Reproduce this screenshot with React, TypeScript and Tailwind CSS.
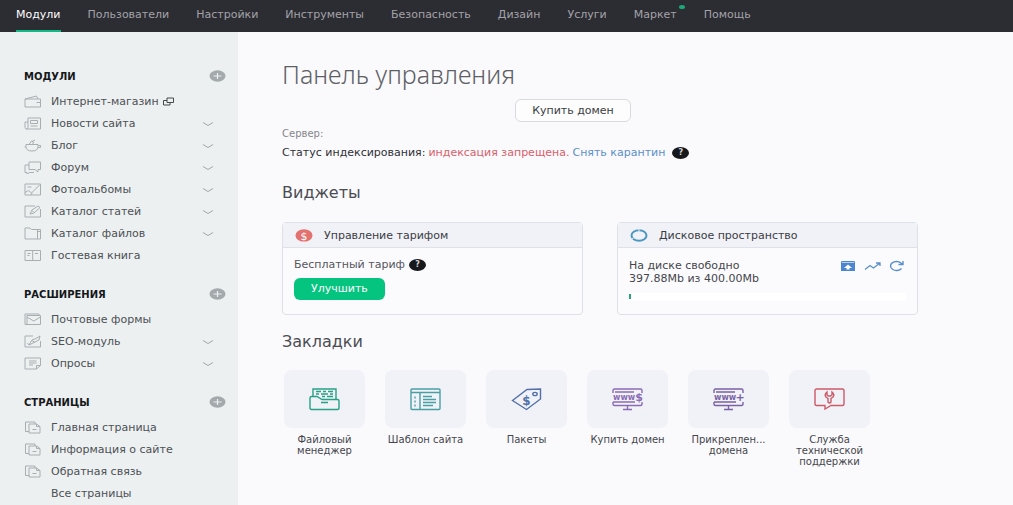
import type { ReactNode } from 'react';

type NavItem = { label: string; active?: boolean; dot?: boolean };

const NAV: NavItem[] = [
  { label: 'Модули', active: true },
  { label: 'Пользователи' },
  { label: 'Настройки' },
  { label: 'Инструменты' },
  { label: 'Безопасность' },
  { label: 'Дизайн' },
  { label: 'Услуги' },
  { label: 'Маркет', dot: true },
  { label: 'Помощь' },
];

// Sidebar glyphs, all drawn in a 17x13 box
const GLYPHS: Record<string, ReactNode> = {
  wallet: <path d="M1 4h15.500v8H1zM1 4 12.500 1l1.500 3M12.500 7.500H16" />,
  news: <path d="M4 1h12.500v11H2.500Q1 12 1 10.500V5h3M4 1v9.500Q4 12 2.500 12M6.500 3.500h7v3h-7zM6.500 9h7" />,
  cup: <path d="M2 5.500h12v2Q14 12 8 12T2 7.500zM14 6.500h2.500v2H14M2 8H.5M5 5.500 7.500 2l2 1-1 2.500M8 2.500 11 1" />,
  forum: <path d="M5 1h11.500v7.500H14V11l-3-2.500H5zM5 4H1v7.500h2V13l2.500-1.500H10" />,
  photo: <path d="M1 1h15.500v11H1zM3.500 4h4M1 9.500l3.500-2 3 2.500 8-8M7 12l1-2" />,
  article: <path d="M11 1H1v11h15.500V4M6 9l2-4 6-4 2 1.500L10 8zM8 5.500 10 7.500" />,
  folder: <path d="M1 12V1h5l1.500 1.500h9V12zM13.500 2.500V12M13.500 4.500h3" />,
  book: <path d="M1 1.500h15.500v10H1zM8.700 1.500v10M3.500 4.500h3M11 4.500h3M3.500 6.500h2" />,
  mail: <path d="M3 2.500h13.500v9H3zM3 4l6.700 4 6.800-4M3 11.500H1V1h14v1.500" />,
  seo: <path d="M9 1H1v11h15.500V6M5 10l3-5 4-1.500 4-2.500-1 4-4 2zM5 10 3.500 8M8 5.500 11 7.500" />,
  poll: <path d="M1 1h15.500v7.500L12.500 12H1zM12.500 12V8.500h4M5 4h7.500M5 6h7.500M5 8h4" />,
  page: <path d="M5 3h7.500L16 5.500V12H5zM12.500 3v2.500H16M5 10.500H1.500V1H11v2M8.500 8.500h4" />,
};

type Entry = { label: string; icon?: string; expandable?: boolean; external?: boolean };

const SECTIONS: { title: string; items: Entry[] }[] = [
  {
    title: 'МОДУЛИ',
    items: [
      { label: 'Интернет-магазин', icon: 'wallet', external: true },
      { label: 'Новости сайта', icon: 'news', expandable: true },
      { label: 'Блог', icon: 'cup', expandable: true },
      { label: 'Форум', icon: 'forum', expandable: true },
      { label: 'Фотоальбомы', icon: 'photo', expandable: true },
      { label: 'Каталог статей', icon: 'article', expandable: true },
      { label: 'Каталог файлов', icon: 'folder', expandable: true },
      { label: 'Гостевая книга', icon: 'book' },
    ],
  },
  {
    title: 'РАСШИРЕНИЯ',
    items: [
      { label: 'Почтовые формы', icon: 'mail' },
      { label: 'SEO-модуль', icon: 'seo', expandable: true },
      { label: 'Опросы', icon: 'poll', expandable: true },
    ],
  },
  {
    title: 'СТРАНИЦЫ',
    items: [
      { label: 'Главная страница', icon: 'page' },
      { label: 'Информация о сайте', icon: 'page' },
      { label: 'Обратная связь', icon: 'page' },
      { label: 'Все страницы' },
    ],
  },
];

function TopNav() {
  return (
    <header className="h-8 bg-[#2c2c33]">
      <nav className="flex h-full gap-[27px] px-4">
        {NAV.map((item) => (
          <a
            key={item.label}
            href="#"
            className={
              item.active
                ? 'relative flex h-8 items-center border-b-2 border-[#12b886] text-white'
                : 'relative flex h-8 items-center pb-[2px] text-[#a3a3a8]'
            }
          >
            {item.label}
            {item.dot && <span className="absolute top-[5px] -right-2 h-1 w-[6px] rounded-[50%] bg-[#19a974]" />}
          </a>
        ))}
      </nav>
    </header>
  );
}

function Sidebar() {
  return (
    <aside className="flex w-[238px] shrink-0 flex-col gap-[14px] bg-[#ecf0f1] pt-[30px] pr-3 pl-6">
      {SECTIONS.map((section) => (
        <section key={section.title}>
          <div className="flex h-7 items-center justify-between">
            <h2 className="text-[10px] font-bold text-[#15171a]">{section.title}</h2>
            <button type="button" aria-label="Добавить">
              <svg width="17" height="12" viewBox="0 0 17 12">
                <ellipse cx="8.500" cy="6" rx="8" ry="5.700" fill="#a4a9ab" />
                <path d="M4.500 6h8M8.500 3v6" stroke="#ecf0f1" strokeWidth="1.200" />
              </svg>
            </button>
          </div>
          <ul>
            {section.items.map((item) => (
              <li key={item.label} className="flex h-[22px] items-center">
                <a href="#" className="flex flex-1 items-center text-[#4d5154]">
                  <span className="w-[27px]">
                    {item.icon && (
                      <svg width="17" height="13" viewBox="0 0 17 13" fill="none" stroke="#a9aeb1">
                        {GLYPHS[item.icon]}
                      </svg>
                    )}
                  </span>
                  <span className="pt-[2px]">{item.label}</span>
                  {item.external && (
                    <svg className="ml-1" width="11" height="9" viewBox="0 0 11 9" fill="none" stroke="#45494c">
                      <path d="M4 1h6.500v4.500H4zM4 3.500H.5v4.500H7V5.500" />
                    </svg>
                  )}
                </a>
                {item.expandable && (
                  <button type="button" aria-label="Развернуть" className="mr-3 pt-[2px]">
                    <svg width="12" height="6" viewBox="0 0 12 6" fill="none" stroke="#a2a7aa">
                      <path d="M1 1.500 6 4.500l5-3" />
                    </svg>
                  </button>
                )}
              </li>
            ))}
          </ul>
        </section>
      ))}
    </aside>
  );
}

function Help() {
  return (
    <button
      type="button"
      className="h-3 w-[17px] rounded-[50%] bg-[#17181b] text-center text-[8px] leading-3 font-bold text-[#d5d5d8]"
    >
      ?
    </button>
  );
}

function Widget({ icon, title, children }: { icon: ReactNode; title: string; children: ReactNode }) {
  return (
    <section className="h-[93px] flex-1 rounded border border-[#dfe1e8] bg-[#fbfbfd]">
      <h3 className="flex h-[25px] items-center gap-[11px] border-b border-[#dfe1e8] bg-[#f1f2f8] pl-3 text-[#3b3c42]">
        {icon}
        <span className="pt-[2px]">{title}</span>
      </h3>
      {children}
    </section>
  );
}

const DollarIcon = (
  <svg width="18" height="13" viewBox="0 0 18 13">
    <ellipse cx="9" cy="6.500" rx="8.500" ry="6.200" fill="#e2716f" />
    <text x="9" y="10.500" fill="#fff" fontSize="11" textAnchor="middle">$</text>
  </svg>
);

const DiskIcon = (
  <svg width="18" height="13" viewBox="0 0 18 13" fill="none" strokeWidth="2">
    <ellipse cx="9" cy="6.500" rx="7.500" ry="5.300" stroke="#4a97c0" />
    <path d="M9 0v2.500M1 10.500 3.500 9" stroke="#f1f2f8" strokeWidth="1" />
  </svg>
);

function Monitor({ sign }: { sign: string }) {
  return (
    <>
      <path d="M1 5V2.500Q1 1 2.500 1h26Q30 1 30 2.500V5M1 14v2q0 1.500 1.500 1.500h26q1.500 0 1.500-1.500v-2M1 14h22M3 4h19M15.500 17.500v3.500M11 21.500h9" />
      <text x="1" y="11.500" fontSize="8" fontWeight="700" fill="currentColor" stroke="none">www</text>
      <text x="27" y="13" fontSize="11" fontWeight="700" textAnchor="middle" fill="currentColor" stroke="none">{sign}</text>
    </>
  );
}

const BOOKMARKS: { label: string; color: string; icon: ReactNode }[] = [
  {
    label: 'Файловый менеджер',
    color: 'text-[#27a085]',
    icon: (
      <>
        <path d="M1 19V10q0-1.500 1.500-1.500H8l5 3h15.500Q30 11.500 30 13V20q0 1.500-1.500 1.500h-26Q1 21.500 1 20zM12 14.500h7" />
        <path d="M4 8.500V1h23v10.500M7 3.500h5M14 3.500h3M19 3.500h5M7 6h3M12 6h7M21 6h3M13 8.500h3M18 8.500h6" />
      </>
    ),
  },
  {
    label: 'Шаблон сайта',
    color: 'text-[#4a9fa5]',
    icon: (
      <>
        <path d="M2 1h27q1 0 1 1v18.500q0 1-1 1H2q-1 0-1-1V2q0-1 1-1zM1 4.500h29M10 4.500v17" />
        <path d="M5 8.500v2M5 12.500v2M5 16.500v2M13 8.500h9M13 11.500h13M13 14.500h13M13 17.500h10" />
      </>
    ),
  },
  {
    label: 'Пакеты',
    color: 'text-[#5370a8]',
    icon: (
      <>
        <path d="M1.500 12.500 16 1.500 29.500 1v10L15.500 21.500z" />
        <ellipse cx="24" cy="6" rx="2.200" ry="1.600" />
        <text x="15.500" y="17" fontSize="12" fontWeight="700" textAnchor="middle" fill="currentColor" stroke="none">$</text>
      </>
    ),
  },
  { label: 'Купить домен', color: 'text-[#8a6bb5]', icon: <Monitor sign="$" /> },
  { label: 'Прикреплен... домена', color: 'text-[#7a62a5]', icon: <Monitor sign="+" /> },
  {
    label: 'Служба технической поддержки',
    color: 'text-[#cc5b68]',
    icon: (
      <>
        <path d="M2.500 1h26Q30 1 30 2.500V16q0 1.500-1.500 1.500H17L11 21v-3.500H2.500Q1 17.500 1 16V2.500Q1 1 2.500 1z" />
        <path d="M13 4q-3 2.500-1 5l2 1.500v3.500q1.500 2 3 0v-3.500l2-1.500q2-2.500-1-5v3l-1.500 1h-2l-1.500-1z" />
      </>
    ),
  },
];

export default function App() {
  return (
    <div className="flex min-h-screen flex-col bg-[#fafafc] font-['DejaVu_Sans',sans-serif] text-[11px]">
      <TopNav />
      <div className="flex flex-1">
        <Sidebar />
        <main className="flex-1 pt-[26px] pl-11">
          <h1 className="font-['Noto_Sans',sans-serif] text-[25px] leading-8 font-light text-[#5e5f65]">Панель управления</h1>
          <div className="mt-[9px] flex max-w-[582px] justify-center">
            <button type="button" className="h-[23px] rounded-md border border-[#d9dade] bg-[#fdfdfe] px-4 pt-[2px] text-[#3b3c42]">
              Купить домен
            </button>
          </div>
          <p className="mt-1 text-[10px] leading-4 text-[#85868b]">Сервер:</p>
          <p className="mt-[3px] flex items-center gap-[3px] leading-4 text-[#2f3035]">
            <span>Статус индексирования:</span>
            <span className="text-[#d9606a]">индексация запрещена.</span>
            <a href="#" className="mr-1 text-[#5b8fcb]">Снять карантин</a>
            <Help />
          </p>

          <h2 className="mt-5 text-[16px] leading-6 text-[#4b4c52]">Виджеты</h2>
          <div className="mt-[17px] flex max-w-[636px] gap-[34px]">
            <Widget icon={DollarIcon} title="Управление тарифом">
              <div className="px-[11px] pt-[9px]">
                <p className="flex items-center gap-1 leading-4 text-[#55565c]">
                  Бесплатный тариф
                  <Help />
                </p>
                <button type="button" className="mt-[5px] h-[22px] rounded-md bg-[#05c47f] px-[17px] text-white">
                  Улучшить
                </button>
              </div>
            </Widget>
            <Widget icon={DiskIcon} title="Дисковое пространство">
              <div className="px-[11px] pt-[11px]">
                <div className="flex items-start justify-between">
                  <p className="w-40 leading-[13px] text-[#45464c]">На диске свободно 397.88Mb из 400.00Mb</p>
                  <div className="flex gap-2 pt-px pr-[2px]">
                    <button type="button" aria-label="Архив">
                      <svg width="16" height="12" viewBox="0 0 16 12">
                        <path d="M1.500 1h13l.5 1.500V11H1V2.500z" fill="#4c86d0" />
                        <path d="M2 2.500h12" stroke="#b9d0ee" />
                        <path d="M8 4.500 12 8H9.500v1.500h-3V8H4z" fill="#fff" />
                      </svg>
                    </button>
                    <button type="button" aria-label="Статистика">
                      <svg width="17" height="12" viewBox="0 0 17 12" fill="none" stroke="#5b8fcb" strokeWidth="1.300">
                        <path d="M1 9.500 6 5.500l3.500 2.500L16 3M12 3h4v3" />
                      </svg>
                    </button>
                    <button type="button" aria-label="Обновить">
                      <svg width="15" height="12" viewBox="0 0 15 12" fill="none" stroke="#5b8fcb" strokeWidth="1.400">
                        <path d="M12.500 8.500A6 4.500 0 1 1 12 3L14 4.500M14 1v3.500H9.500" />
                      </svg>
                    </button>
                  </div>
                </div>
                <div role="progressbar" aria-label="Занято на диске" aria-valuenow={1} className="mt-2 h-2 bg-white py-px">
                  <div className="h-[5px] w-[2px] bg-[#2aa37c]" />
                </div>
              </div>
            </Widget>
          </div>

          <h2 className="mt-[15px] text-[16px] leading-6 text-[#4b4c52]">Закладки</h2>
          <ul className="mt-4 flex gap-5 pl-[2px]">
            {BOOKMARKS.map((b) => (
              <li key={b.label} className="w-[81px]">
                <a href="#" className="flex flex-col items-center text-center text-[10px] leading-[11px] text-[#45464c]">
                  <span className={`flex h-[58px] w-full items-center justify-center rounded-lg bg-[#f1f2f7] ${b.color}`}>
                    <svg width="31" height="23" viewBox="0 0 31 23" fill="none" stroke="currentColor" strokeWidth="1.400">
                      {b.icon}
                    </svg>
                  </span>
                  <span className="mt-[6px]">{b.label}</span>
                </a>
              </li>
            ))}
          </ul>
        </main>
      </div>
    </div>
  );
}
